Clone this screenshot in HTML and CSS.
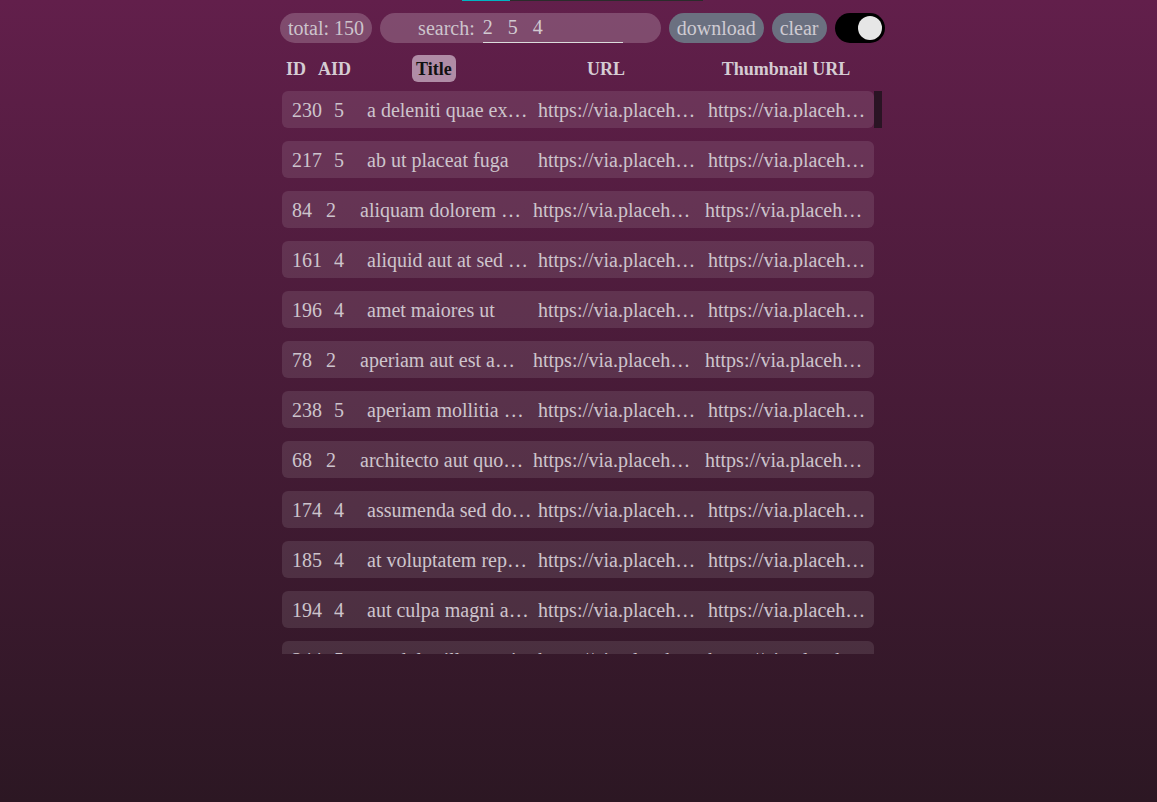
FILE: index.html
```html
<!DOCTYPE html>
<html lang="en">
<head>
<meta charset="utf-8">
<title>Photos</title>
<link rel="stylesheet" href="styles.css">
</head>
<body>
<div class="page">
  <div class="app">
    <div class="progress"><span class="progress-done"></span><span class="progress-rest"></span></div>
    <div class="controls">
      <div class="pill total">total: 150</div>
      <label class="pill search"><span class="search-label">search:</span><input class="search-input" type="text" value="2 5 4"></label>
      <button class="pill btn">download</button>
      <button class="pill btn">clear</button>
      <div class="toggle"><span class="knob"></span></div>
    </div>
    <div class="thead">
      <div class="h-id">ID</div>
      <div class="h-aid">AID</div>
      <div class="h-title"><span class="sorted">Title</span></div>
      <div class="h-url">URL</div>
      <div class="h-thumb">Thumbnail URL</div>
    </div>
    <div class="list">
      <div class="rows">
        <div class="row"><div class="cell c-id">230</div><div class="cell c-aid">5</div><div class="cell c-title">a deleniti quae excepturi</div><div class="cell c-url">https://via.placeholder.com/600/b5b3a4</div><div class="cell c-thumb">https://via.placeholder.com/150/b5b3a4</div></div>
        <div class="row"><div class="cell c-id">217</div><div class="cell c-aid">5</div><div class="cell c-title">ab ut placeat fuga</div><div class="cell c-url">https://via.placeholder.com/600/9b1e4b</div><div class="cell c-thumb">https://via.placeholder.com/150/9b1e4b</div></div>
        <div class="row two"><div class="cell c-id">84</div><div class="cell c-aid">2</div><div class="cell c-title">aliquam dolorem ut modi</div><div class="cell c-url">https://via.placeholder.com/600/2e5d8f</div><div class="cell c-thumb">https://via.placeholder.com/150/2e5d8f</div></div>
        <div class="row"><div class="cell c-id">161</div><div class="cell c-aid">4</div><div class="cell c-title">aliquid aut at sed repellendus</div><div class="cell c-url">https://via.placeholder.com/600/7c3a51</div><div class="cell c-thumb">https://via.placeholder.com/150/7c3a51</div></div>
        <div class="row"><div class="cell c-id">196</div><div class="cell c-aid">4</div><div class="cell c-title">amet maiores ut</div><div class="cell c-url">https://via.placeholder.com/600/d36f1a</div><div class="cell c-thumb">https://via.placeholder.com/150/d36f1a</div></div>
        <div class="row two"><div class="cell c-id">78</div><div class="cell c-aid">2</div><div class="cell c-title">aperiam aut est amet et</div><div class="cell c-url">https://via.placeholder.com/600/6e1f92</div><div class="cell c-thumb">https://via.placeholder.com/150/6e1f92</div></div>
        <div class="row"><div class="cell c-id">238</div><div class="cell c-aid">5</div><div class="cell c-title">aperiam mollitia maxime</div><div class="cell c-url">https://via.placeholder.com/600/4a8c2b</div><div class="cell c-thumb">https://via.placeholder.com/150/4a8c2b</div></div>
        <div class="row two"><div class="cell c-id">68</div><div class="cell c-aid">2</div><div class="cell c-title">architecto aut quod qui ullam</div><div class="cell c-url">https://via.placeholder.com/600/c21d3e</div><div class="cell c-thumb">https://via.placeholder.com/150/c21d3e</div></div>
        <div class="row"><div class="cell c-id">174</div><div class="cell c-aid">4</div><div class="cell c-title">assumenda sed dolores</div><div class="cell c-url">https://via.placeholder.com/600/1f6ab0</div><div class="cell c-thumb">https://via.placeholder.com/150/1f6ab0</div></div>
        <div class="row"><div class="cell c-id">185</div><div class="cell c-aid">4</div><div class="cell c-title">at voluptatem repellat</div><div class="cell c-url">https://via.placeholder.com/600/88a4d2</div><div class="cell c-thumb">https://via.placeholder.com/150/88a4d2</div></div>
        <div class="row"><div class="cell c-id">194</div><div class="cell c-aid">4</div><div class="cell c-title">aut culpa magni aliquid</div><div class="cell c-url">https://via.placeholder.com/600/5f2b9c</div><div class="cell c-thumb">https://via.placeholder.com/150/5f2b9c</div></div>
        <div class="row"><div class="cell c-id">244</div><div class="cell c-aid">5</div><div class="cell c-title">aut dolor illum quia</div><div class="cell c-url">https://via.placeholder.com/600/e07a33</div><div class="cell c-thumb">https://via.placeholder.com/150/e07a33</div></div>
      </div>
      <div class="scrollbar"><div class="thumb"></div></div>
    </div>
  </div>
</div>
</body>
</html>
```

FILE: styles.css
```css
html {
  min-height: 100%;
  background: linear-gradient(180deg, #621f4b 0%, #2c1723 100%);
}
body {
  margin: 0;
  font-family: "Liberation Serif", "Times New Roman", serif;
  color: #cdc4cc;
}
.page {
  padding-left: 7px;
}
.app {
  width: 604px;
  margin: 0 auto;
}
.progress {
  display: flex;
  width: 241px;
  height: 1px;
  margin: 0 auto;
}
.progress-done {
  width: 48px;
  background: #00b4c4;
}
.progress-rest {
  flex: 1;
  background: #2b2b2b;
}
.controls {
  display: flex;
  gap: 8px;
  margin-top: 12px;
  height: 30px;
}
.pill {
  box-sizing: border-box;
  flex-shrink: 0;
  height: 30px;
  border-radius: 15px;
  display: flex;
  align-items: center;
  padding: 0 8px;
  font-family: inherit;
  font-size: 20px;
  color: #cdc4cc;
  border: none;
  white-space: nowrap;
}
.total {
  background: rgba(255, 255, 255, 0.2);
}
.search {
  background: rgba(255, 255, 255, 0.2);
  padding: 0 38px;
  gap: 8px;
  align-items: stretch;
}
.search-label {
  display: flex;
  align-items: center;
}
.search-input {
  box-sizing: border-box;
  width: 140px;
  height: 30px;
  padding: 0;
  margin: 0;
  border: none;
  border-bottom: 1px solid #dcdcdc;
  background: transparent;
  color: #d2cad1;
  font-family: inherit;
  font-size: 20px;
  letter-spacing: 5px;
  outline: none;
}
.btn {
  background: #6b7080;
  color: #cfcbd2;
}
.toggle {
  box-sizing: border-box;
  flex-shrink: 0;
  width: 50px;
  height: 30px;
  border-radius: 15px;
  background: #000;
  display: flex;
  align-items: center;
  justify-content: flex-end;
  padding: 0 3px;
}
.knob {
  width: 24px;
  height: 24px;
  border-radius: 50%;
  background: #e6e6e6;
}
.thead {
  display: flex;
  align-items: center;
  height: 27px;
  margin-top: 12px;
  padding-left: 6px;
  font-size: 18px;
  font-weight: bold;
  color: #d5ccd3;
  white-space: nowrap;
}
.thead > div {
  padding-top: 2px;
}
.thead > .h-title {
  padding-top: 0;
}
.h-id { width: 32px; }
.h-aid { width: 94px; }
.h-title { width: 104px; }
.h-url { width: 180px; text-align: center; }
.h-thumb { width: 180px; text-align: center; }
.sorted {
  display: inline-block;
  height: 27px;
  line-height: 29px;
  padding: 0 4px;
  border-radius: 6px;
  background: #b08ca6;
  color: #111;
}
.list {
  display: flex;
  margin-top: 9px;
  margin-left: 2px;
  width: 600px;
  height: 563px;
  overflow: hidden;
}
.rows {
  width: 592px;
  flex-shrink: 0;
}
.scrollbar {
  width: 8px;
  flex-shrink: 0;
}
.thumb {
  height: 37px;
  background: #2a1424;
}
.row {
  box-sizing: border-box;
  display: flex;
  align-items: center;
  width: 592px;
  height: 37px;
  padding: 0 6px 0 10px;
  margin-bottom: 13px;
  border-radius: 6px;
  background: rgba(255, 255, 255, 0.1);
  font-size: 20px;
  line-height: 23px;
}
.cell {
  box-sizing: border-box;
  flex-shrink: 0;
  padding-top: 2px;
  white-space: nowrap;
  overflow: hidden;
  text-overflow: ellipsis;
}
.c-id { width: 42px; }
.c-aid { width: 33px; }
.c-title { width: 171px; padding-right: 4px; }
.c-url { width: 170px; padding-right: 4px; }
.c-thumb { flex: 1; min-width: 0; }
.row.two .c-id { width: 34px; }
.row.two .c-aid { width: 34px; }
.row.two .c-title { width: 173px; padding-right: 6px; }
.row.two .c-url { width: 172px; padding-right: 6px; }
.row.two .c-thumb { padding-right: 3px; }
```
